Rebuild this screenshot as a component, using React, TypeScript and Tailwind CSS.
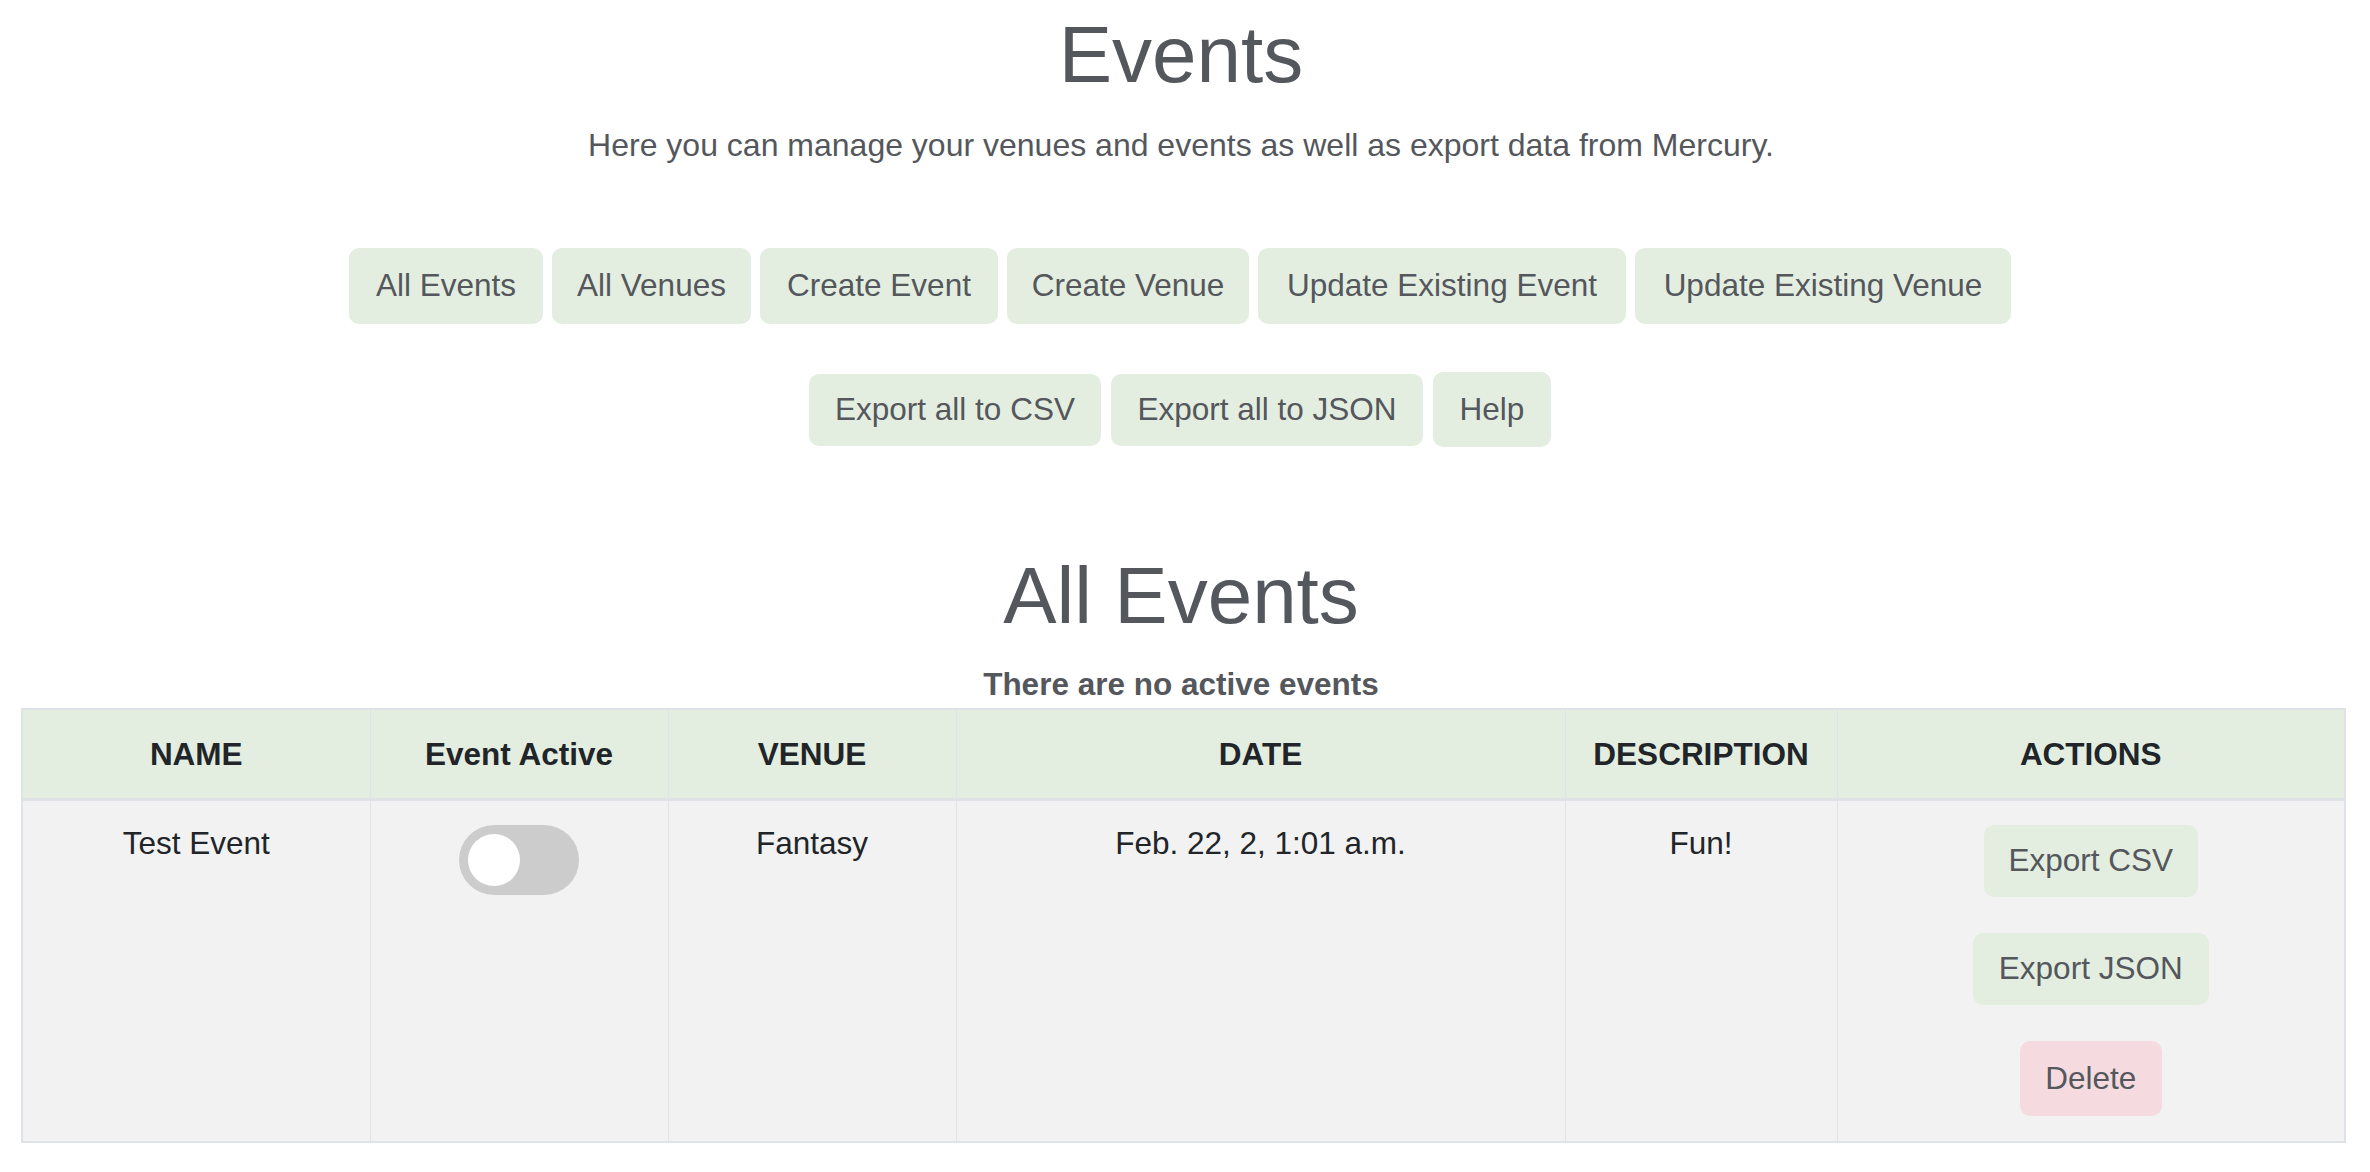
import { useState } from 'react'

const topButtons = [
  { label: 'All Events', w: 'w-[194px]' },
  { label: 'All Venues', w: 'w-[199px]' },
  { label: 'Create Event', w: 'w-[238px]' },
  { label: 'Create Venue', w: 'w-[242px]' },
  { label: 'Update Existing Event', w: 'w-[368px]' },
  { label: 'Update Existing Venue', w: 'w-[376px]' },
]

const exportButtons = [
  { label: 'Export all to CSV', w: 'w-[292px]', h: 'h-[72px]' },
  { label: 'Export all to JSON', w: 'w-[312px]', h: 'h-[72px]' },
  { label: 'Help', w: 'w-[118px]', h: 'h-[75px]' },
]

const columns = [
  { label: 'NAME', w: 'w-[348px]' },
  { label: 'Event Active', w: 'w-[298px]' },
  { label: 'VENUE', w: 'w-[288px]' },
  { label: 'DATE', w: 'w-[609px]' },
  { label: 'DESCRIPTION', w: 'w-[272px]' },
  { label: 'ACTIONS', w: 'w-[508px]' },
]

function Toggle() {
  const [on, setOn] = useState(false)
  return (
    <button
      type="button"
      onClick={() => setOn(!on)}
      className={`relative inline-block h-[70px] w-[120px] rounded-full ${on ? 'bg-[#8fbf86]' : 'bg-[#cccccc]'}`}
      aria-pressed={on}
    >
      <span
        className={`absolute top-[9px] h-[52px] w-[52px] rounded-full bg-white ${on ? 'left-[59px]' : 'left-[9px]'}`}
      />
    </button>
  )
}

export default function App() {
  return (
    <div className="min-h-screen w-full bg-white font-['Liberation_Sans',Arial,sans-serif] text-[#54575c]">
      <div className="w-[2362px]">
        <h1 className="mt-[15px] text-center text-[80px] leading-[80px] font-normal">Events</h1>
        <p className="mt-[34px] text-center text-[32px] leading-[32px]">
          Here you can manage your venues and events as well as export data from Mercury.
        </p>

        <div className="mt-[87px] flex justify-center gap-[9px] pr-[2px]">
          {topButtons.map((b) => (
            <button
              key={b.label}
              type="button"
              className={`flex h-[76px] ${b.w} items-center justify-center rounded-[10px] bg-[#e3eee0] text-[31.5px] text-[#54575c]`}
            >
              {b.label}
            </button>
          ))}
        </div>

        <div className="mt-[48px] flex items-center justify-center gap-[10px] pr-[2px]">
          {exportButtons.map((b) => (
            <button
              key={b.label}
              type="button"
              className={`flex ${b.h} ${b.w} items-center justify-center rounded-[10px] bg-[#e3eee0] text-[31.5px] text-[#54575c]`}
            >
              {b.label}
            </button>
          ))}
        </div>

        <h2 className="mt-[109px] text-center text-[80px] leading-[80px] font-normal">All Events</h2>
        <p className="mt-[29px] text-center text-[31.5px] leading-[38px] font-bold">There are no active events</p>

        <table className="mt-[5px] ml-[21px] w-[2323px] table-fixed border-collapse border-2 border-[#dfe2e6] text-[31.5px]">
          <thead>
            <tr className="bg-[#e3eee0]">
              {columns.map((c) => (
                <th
                  key={c.label}
                  className={`${c.w} border border-b-[3px] border-[#dfe2e6] pt-[24px] pb-[23px] text-center leading-[41px] font-bold text-[#212529]`}
                >
                  {c.label}
                </th>
              ))}
            </tr>
          </thead>
          <tbody>
            <tr className="bg-[#f2f2f2] align-top text-[#212529]">
              <td className="border border-[#dfe2e6] pt-[24px] text-center leading-[1.2]">Test Event</td>
              <td className="border border-[#dfe2e6] pt-[24px] text-center leading-none">
                <Toggle />
              </td>
              <td className="border border-[#dfe2e6] pt-[24px] text-center leading-[1.2]">Fantasy</td>
              <td className="border border-[#dfe2e6] pt-[24px] text-center leading-[1.2]">Feb. 22, 2, 1:01 a.m.</td>
              <td className="border border-[#dfe2e6] pt-[24px] text-center leading-[1.2]">Fun!</td>
              <td className="border border-[#dfe2e6] pt-[24px] pb-[25px]">
                <div className="flex flex-col items-center gap-[36px]">
                  <button
                    type="button"
                    className="flex h-[72px] w-[214px] items-center justify-center rounded-[10px] bg-[#e3eee0] text-[#54575c]"
                  >
                    Export CSV
                  </button>
                  <button
                    type="button"
                    className="flex h-[72px] w-[236px] items-center justify-center rounded-[10px] bg-[#e3eee0] text-[#54575c]"
                  >
                    Export JSON
                  </button>
                  <button
                    type="button"
                    className="flex h-[75px] w-[142px] items-center justify-center rounded-[10px] bg-[#f5dbe0] text-[#54575c]"
                  >
                    Delete
                  </button>
                </div>
              </td>
            </tr>
          </tbody>
        </table>
      </div>
    </div>
  )
}
